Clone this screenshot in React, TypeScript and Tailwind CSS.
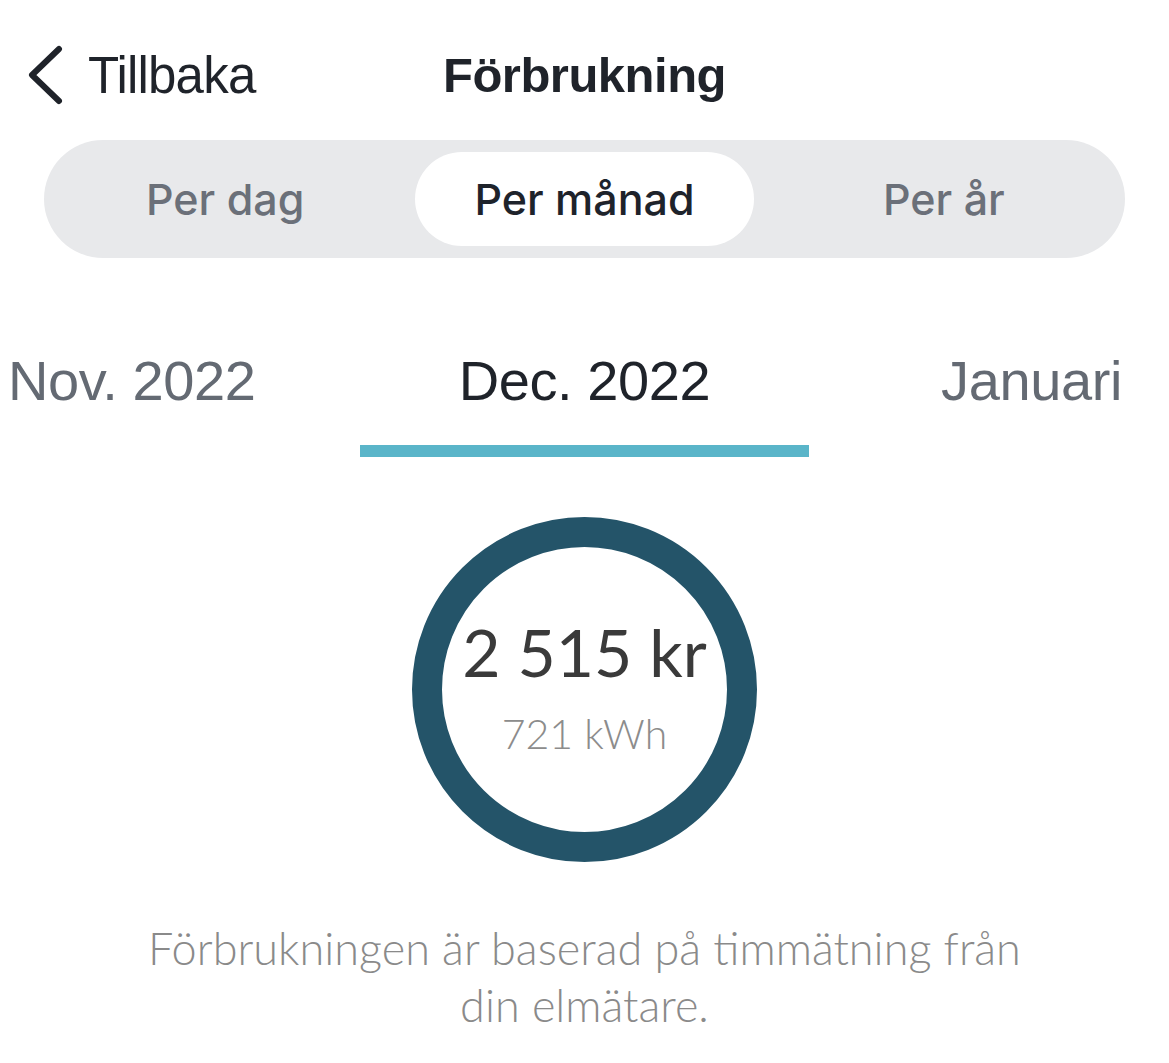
import { useState } from 'react';

const periods = ['Per dag', 'Per månad', 'Per år'];

const App = () => {
  const [period, setPeriod] = useState(1);

  return (
    <div className="w-[1169px] h-[1063px] bg-white overflow-hidden font-['Liberation_Sans',sans-serif]">
      {/* Header */}
      <header className="grid grid-cols-[1fr_auto_1fr] items-center h-[140px] pt-[10px]">
        <button className="flex items-center pl-[26px] text-[#1f232a]">
          <svg width="40" height="60" viewBox="0 0 40 60" fill="none">
            <polyline
              points="33,4 6,30 33,56"
              stroke="#1f232a"
              strokeWidth="6"
              strokeLinecap="round"
              strokeLinejoin="round"
            />
          </svg>
          <span className="ml-[22px] text-[51px] leading-none tracking-[-0.8px]">Tillbaka</span>
        </button>
        <h1 className="text-[49px] leading-none font-bold tracking-[-0.5px] text-[#1f232a]">Förbrukning</h1>
        <div />
      </header>

      {/* Segmented control */}
      <div className="mx-[44px] h-[118px] rounded-full bg-[#e8e9eb] p-[12px] grid grid-cols-3 gap-[21px] font-['Inter',sans-serif]">
        {periods.map((p, i) => (
          <button
            key={p}
            onClick={() => setPeriod(i)}
            className={`rounded-full flex items-center justify-center text-[43px] font-medium ${
              period === i ? 'bg-white text-[#1e232b]' : 'text-[#6b7079]'
            }`}
          >
            {p}
          </button>
        ))}
      </div>

      {/* Month tabs */}
      <div className="mt-[95px] grid grid-cols-3 text-[56px] leading-none tracking-[-0.4px]">
        <div className="pl-[8px] text-[#646a73]">Nov. 2022</div>
        <div className="flex flex-col items-center text-[#1f232a]">
          <span>Dec. 2022</span>
          <div className="mt-[36px] w-[449px] h-[12px] bg-[#5ab5c9]" />
        </div>
        <div className="flex justify-end pr-[47px] text-[#646a73]">Januari</div>
      </div>

      {/* Ring */}
      <div className="mt-[60px] flex justify-center font-['Lato',sans-serif]">
        <div className="w-[345px] h-[345px] rounded-full border-[30px] border-[#245469] flex flex-col items-center justify-center">
          <div className="text-[66px] leading-none text-[#3a3a3a] mt-[-6px]">2 515 kr</div>
          <div className="mt-[28px] text-[41px] leading-none font-light text-[#8c8c8c]">721 kWh</div>
        </div>
      </div>

      {/* Footer note */}
      <p className="mt-[58px] text-center text-[45px] leading-[57px] font-light text-[#8a8a8a] font-['Lato',sans-serif]">
        Förbrukningen är baserad på timmätning från
        <br />
        din elmätare.
      </p>
    </div>
  );
};

export default App;
